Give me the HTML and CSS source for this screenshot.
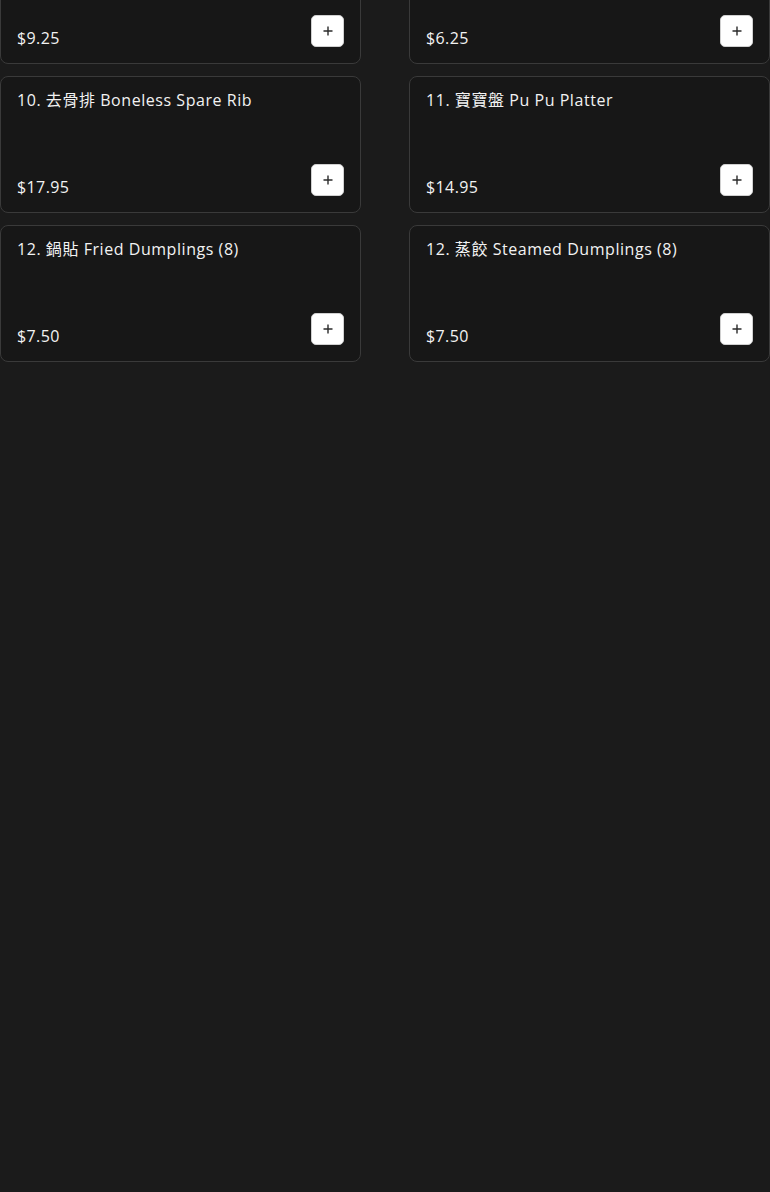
FILE: index.html
```html
<!DOCTYPE html>
<html lang="en">
<head>
<meta charset="utf-8">
<title>Menu</title>
<link rel="stylesheet" href="styles.css">
</head>
<body>
<main class="menu-grid">
  <article class="item-card">
    <div class="item-footer">
      <span class="item-price">$9.25</span>
      <button class="add-btn" aria-label="Add"><svg viewBox="0 0 12 12" width="12" height="12"><path d="M6 1.5v9M1.5 6h9" stroke="#2b2b2b" stroke-width="1.4" fill="none"/></svg></button>
    </div>
  </article>
  <article class="item-card">
    <div class="item-footer">
      <span class="item-price">$6.25</span>
      <button class="add-btn" aria-label="Add"><svg viewBox="0 0 12 12" width="12" height="12"><path d="M6 1.5v9M1.5 6h9" stroke="#2b2b2b" stroke-width="1.4" fill="none"/></svg></button>
    </div>
  </article>
  <article class="item-card">
    <h3 class="item-name">10. 去骨排 Boneless Spare Rib</h3>
    <div class="item-footer">
      <span class="item-price">$17.95</span>
      <button class="add-btn" aria-label="Add"><svg viewBox="0 0 12 12" width="12" height="12"><path d="M6 1.5v9M1.5 6h9" stroke="#2b2b2b" stroke-width="1.4" fill="none"/></svg></button>
    </div>
  </article>
  <article class="item-card">
    <h3 class="item-name">11. 寶寶盤 Pu Pu Platter</h3>
    <div class="item-footer">
      <span class="item-price">$14.95</span>
      <button class="add-btn" aria-label="Add"><svg viewBox="0 0 12 12" width="12" height="12"><path d="M6 1.5v9M1.5 6h9" stroke="#2b2b2b" stroke-width="1.4" fill="none"/></svg></button>
    </div>
  </article>
  <article class="item-card">
    <h3 class="item-name">12. 鍋貼 Fried Dumplings (8)</h3>
    <div class="item-footer">
      <span class="item-price">$7.50</span>
      <button class="add-btn" aria-label="Add"><svg viewBox="0 0 12 12" width="12" height="12"><path d="M6 1.5v9M1.5 6h9" stroke="#2b2b2b" stroke-width="1.4" fill="none"/></svg></button>
    </div>
  </article>
  <article class="item-card">
    <h3 class="item-name">12. 蒸餃 Steamed Dumplings (8)</h3>
    <div class="item-footer">
      <span class="item-price">$7.50</span>
      <button class="add-btn" aria-label="Add"><svg viewBox="0 0 12 12" width="12" height="12"><path d="M6 1.5v9M1.5 6h9" stroke="#2b2b2b" stroke-width="1.4" fill="none"/></svg></button>
    </div>
  </article>
</main>
</body>
</html>
```

FILE: styles.css
```css
html, body {
  margin: 0;
  padding: 0;
  background: #1b1b1b;
  height: 100%;
}
body {
  font-family: "Open Sans", "Noto Sans CJK TC", sans-serif;
  color: #f2f2f2;
  overflow: hidden;
}
.menu-grid {
  display: grid;
  grid-template-columns: 361px 361px;
  column-gap: 48px;
  row-gap: 12px;
  margin-top: -73px;
}
.item-card {
  box-sizing: border-box;
  height: 137px;
  background: #171717;
  border: 1px solid #3a3a3a;
  border-radius: 8px;
  padding: 11px 16px 16px 16px;
  display: flex;
  flex-direction: column;
}
.item-name {
  margin: 0;
  font-size: 16px;
  font-weight: 400;
  line-height: 24px;
  letter-spacing: 0.55px;
}
.item-footer {
  margin-top: auto;
  display: flex;
  justify-content: space-between;
  align-items: flex-end;
}
.item-price {
  font-size: 16px;
  line-height: 18px;
  letter-spacing: 0.4px;
}
.add-btn {
  box-sizing: border-box;
  width: 33px;
  height: 32px;
  padding: 0;
  background: #ffffff;
  border: 1px solid #d0d0d0;
  border-radius: 5px;
  display: flex;
  align-items: center;
  justify-content: center;
  cursor: pointer;
}
.add-btn svg {
  display: block;
}
```
